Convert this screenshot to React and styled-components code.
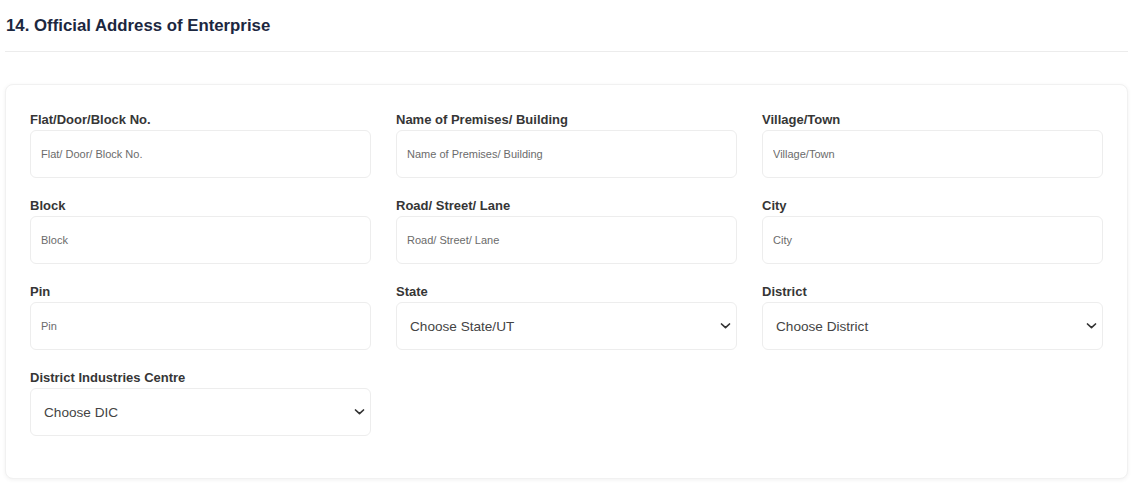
import React from 'react';
import styled, { createGlobalStyle } from 'styled-components';

const GlobalStyle = createGlobalStyle`
  body {
    margin: 0;
    background: #ffffff;
    font-family: "Liberation Sans", Arial, sans-serif;
  }
`

const Page = styled.div`
  width: 1148px;
  padding: 0 20px 16px 5px;
  box-sizing: border-box;
`

const Heading = styled.h2`
  margin: 0;
  padding: 16px 0 16px 1px;
  font-size: 16.8px;
  line-height: 19px;
  font-weight: 700;
  color: #1c2740;
  border-bottom: 1px solid #ececec;
`

const Card = styled.div`
  margin-top: 32px;
  background: #fff;
  border: 1px solid #f1f1f1;
  border-radius: 8px;
  box-shadow: 0 1px 4px rgba(0, 0, 0, 0.06);
  padding: 27px 24px 42px 24px;
  display: grid;
  grid-template-columns: repeat(3, 1fr);
  column-gap: 25px;
  row-gap: 20px;
`

const Field = styled.div`
  display: flex;
  flex-direction: column;
`

const Label = styled.label`
  font-size: 13px;
  font-weight: 700;
  color: #363636;
  line-height: 15px;
  margin-bottom: 3px;
`

const Input = styled.input`
  height: 48px;
  box-sizing: border-box;
  border: 1px solid #ededed;
  border-radius: 6px;
  padding: 0 10px;
  font-family: "Liberation Sans", Arial, sans-serif;
  font-size: 11px;
  color: #333;
  outline: none;
  &::placeholder { color: #6b6b6b; }
`

const SelectWrap = styled.div`
  position: relative;
  svg {
    position: absolute;
    right: 6px;
    top: 50%;
    transform: translateY(-50%);
    pointer-events: none;
  }
`

const Select = styled.select`
  width: 100%;
  height: 48px;
  box-sizing: border-box;
  border: 1px solid #ededed;
  border-radius: 6px;
  padding: 0 13px;
  appearance: none;
  background: #fff;
  font-family: "Liberation Sans", Arial, sans-serif;
  font-size: 13.6px;
  color: #444;
  outline: none;
`

const Chevron = () => (
  <svg width="11" height="7" viewBox="0 0 11 7">
    <path d="M1.5 1.5 L5.5 5.2 L9.5 1.5" fill="none" stroke="#333" strokeWidth="1.7" strokeLinecap="round" strokeLinejoin="round" />
  </svg>
)

const fields = [
  { label: 'Flat/Door/Block No.', placeholder: 'Flat/ Door/ Block No.' },
  { label: 'Name of Premises/ Building', placeholder: 'Name of Premises/ Building' },
  { label: 'Village/Town', placeholder: 'Village/Town' },
  { label: 'Block', placeholder: 'Block' },
  { label: 'Road/ Street/ Lane', placeholder: 'Road/ Street/ Lane' },
  { label: 'City', placeholder: 'City' },
  { label: 'Pin', placeholder: 'Pin' },
  { label: 'State', select: 'Choose State/UT' },
  { label: 'District', select: 'Choose District' },
  { label: 'District Industries Centre', select: 'Choose DIC' },
]

const App = () => {
  return (
    <Page>
      <GlobalStyle />
      <Heading>14. Official Address of Enterprise</Heading>
      <Card>
        {fields.map(f => (
          <Field key={f.label}>
            <Label>{f.label}</Label>
            {f.select ? (
              <SelectWrap>
                <Select defaultValue="">
                  <option value="">{f.select}</option>
                </Select>
                <Chevron />
              </SelectWrap>
            ) : (
              <Input placeholder={f.placeholder} />
            )}
          </Field>
        ))}
      </Card>
    </Page>
  )
}

export default App;
